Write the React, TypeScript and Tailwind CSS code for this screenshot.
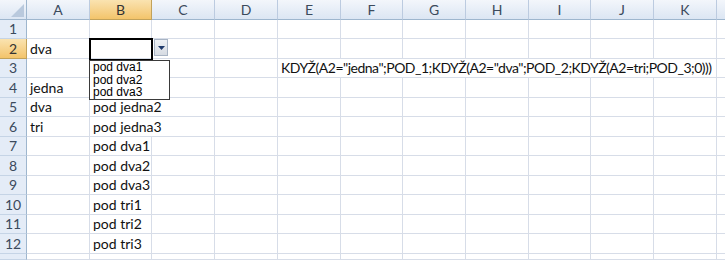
import React from "react";

const colWidths = [27, 63, 62, 63, 63, 63, 62, 63, 63, 62, 63, 63];
const colNames = ["A", "B", "C", "D", "E", "F", "G", "H", "I", "J", "K"];
const rowHeights = [19, 20, 19, 20, 19, 20, 19, 20, 19, 20, 19, 20];

const data: Record<string, string> = {
  A2: "dva",
  A4: "jedna",
  A5: "dva",
  A6: "tri",
  B5: "pod jedna2",
  B6: "pod jedna3",
  B7: "pod dva1",
  B8: "pod dva2",
  B9: "pod dva3",
  B10: "pod tri1",
  B11: "pod tri2",
  B12: "pod tri3",
  E3: 'KDYŽ(A2="jedna";POD_1;KDYŽ(A2="dva";POD_2;KDYŽ(A2=tri;POD_3;0)))',
};

const noRight = new Set(["B4", "B5", "B6", "E3", "F3", "G3", "H3", "I3", "J3"]);

const font = { fontFamily: 'Lato, "Liberation Sans", sans-serif' };

export default function App() {
  const gridCols = colWidths.map((w) => `${w}px`).join(" ") + " 1fr";
  const gridRows = "20px " + rowHeights.map((h) => `${h}px`).join(" ") + " 1fr";

  const cells: React.ReactNode[] = [];

  cells.push(
    <div
      key="corner"
      className="relative border-r border-b border-[#9eb6ce] bg-gradient-to-b from-[#f3f6fb] to-[#dce6f3]"
    >
      <svg className="absolute right-[2px] bottom-[2px]" width="13" height="13" viewBox="0 0 13 13">
        <polygon points="13,0 13,13 0,13" fill="#b9c9dd" />
      </svg>
    </div>
  );
  colNames.forEach((c) => {
    const sel = c === "B";
    cells.push(
      <div
        key={"h" + c}
        className={
          "flex items-center justify-center border-r border-b text-[14px] " +
          (sel
            ? "border-[#c2a25a] bg-gradient-to-b from-[#fae3b0] to-[#f3c46a] text-[#333]"
            : "border-[#bccbe0] border-b-[#9eb6ce] bg-gradient-to-b from-[#f3f6fb] to-[#dce6f3] text-[#3b4a5c]")
        }
      >
        {c}
      </div>
    );
  });
  cells.push(
    <div key="hL" className="border-b border-[#9eb6ce] bg-gradient-to-b from-[#f3f6fb] to-[#dce6f3]" />
  );

  for (let r = 1; r <= 13; r++) {
    const sel = r === 2;
    cells.push(
      <div
        key={"r" + r}
        className={
          "flex items-center justify-center border-r border-b text-[14px] leading-none " +
          (sel
            ? "border-[#c2a25a] bg-gradient-to-b from-[#fae3b0] to-[#f3c46a] text-[#333]"
            : "border-[#c5d4e6] border-r-[#9eb6ce] bg-[#e4ecf7] text-[#3b4a5c]")
        }
      >
        {r <= 12 ? r : ""}
      </div>
    );
    colNames.forEach((c) => {
      const id = c + r;
      const txt = data[id];
      cells.push(
        <div
          key={id}
          className={
            "flex items-end whitespace-nowrap border-b border-[#d7dde8] pl-[3px] pb-[1px] text-[14px] leading-[17px] text-[#111] " +
            (noRight.has(id) ? "" : "border-r ") +
            (id === "E3" ? "tracking-[-0.5px]" : "")
          }
        >
          {txt ?? ""}
        </div>
      );
    });
    cells.push(<div key={"L" + r} className="border-b border-[#d7dde8]" />);
  }

  return (
    <div className="relative h-[260px] w-[725px] overflow-hidden bg-white" style={font}>
      <div
        className="grid h-[260px] w-[725px]"
        style={{ gridTemplateColumns: gridCols, gridTemplateRows: gridRows }}
      >
        {cells}
      </div>

      {/* active cell */}
      <div className="absolute left-[89px] top-[38px] h-[23px] w-[64px] border-2 border-black" />

      {/* dropdown button */}
      <div className="absolute left-[154px] top-[39px] flex h-[17px] w-[14px] items-center justify-center border border-[#a8b4c4] bg-gradient-to-b from-[#eef1f5] to-[#d6dbe2]">
        <svg width="7" height="4" viewBox="0 0 7 4">
          <polygon points="0,0 7,0 3.5,4" fill="#1f3a6b" />
        </svg>
      </div>

      {/* dropdown list */}
      <div
        className="absolute left-[89px] top-[60px] flex h-[40px] w-[81px] flex-col border border-[#3a3a3a] bg-white pl-[3px] text-[12px] leading-[12.6px] text-black"
        style={{ fontFamily: '"Liberation Sans", Arial, sans-serif' }}
      >
        <div>pod dva1</div>
        <div>pod dva2</div>
        <div>pod dva3</div>
      </div>
    </div>
  );
}
